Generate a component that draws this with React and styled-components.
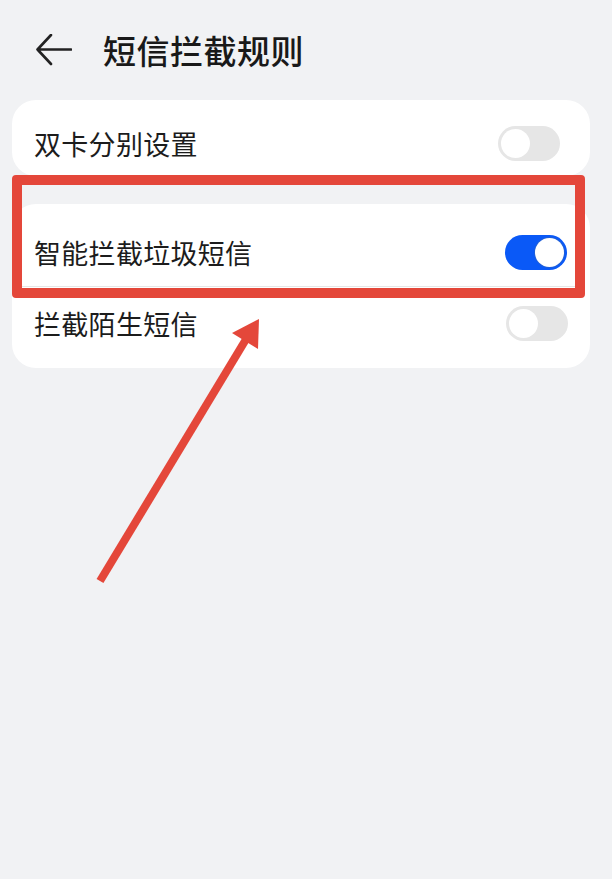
import styled, { createGlobalStyle } from "styled-components";

const GlobalStyle = createGlobalStyle`
  html, body {
    margin: 0;
    padding: 0;
    background: #f1f2f4;
  }
  body {
    font-family: "Noto Sans CJK SC", "Noto Sans", sans-serif;
    color: #1a1a1a;
  }
`;

const StyledPage = styled.main`
  position: relative;
  width: 612px;
  height: 879px;
  overflow: hidden;
  background: #f1f2f4;
`;

const StyledHeader = styled.header`
  height: 100px;
  display: flex;
  align-items: center;
  padding: 0 0 0 36px;
  box-sizing: border-box;
  gap: 31px;
`;

const StyledBack = styled.button`
  border: 0;
  background: none;
  padding: 0;
  width: 36px;
  height: 32px;
  display: flex;
  align-items: center;
  cursor: pointer;
`;

const StyledTitle = styled.h1`
  margin: 0;
  font-size: 33px;
  font-weight: 500;
  letter-spacing: 0.5px;
  color: #191919;
  line-height: 1;
`;

const StyledCards = styled.div`
  display: flex;
  flex-direction: column;
  gap: 28px;
  padding: 0 22px 0 12px;
`;

const StyledCard = styled.section`
  background: #ffffff;
  border-radius: 24px;
  padding: ${(props) => props.$padding};
`;

const StyledRow = styled.div`
  display: flex;
  align-items: center;
  justify-content: space-between;
  height: ${(props) => props.$height}px;
  padding: 0 ${(props) => props.$right}px 0 22px;
`;

const StyledLabel = styled.span`
  font-size: 27px;
  letter-spacing: 0.3px;
  color: #1c1c1c;
`;

const StyledDivider = styled.div`
  height: 1px;
  margin: 0 12px 0 6px;
  background: #e6e6e6;
`;

const StyledToggle = styled.span`
  position: relative;
  width: 62px;
  height: 35px;
  border-radius: 18px;
  box-sizing: border-box;
  background: ${(props) => (props.$on ? "#0a59f7" : "#e6e6e6")};
  flex-shrink: 0;

  &::after {
    content: "";
    position: absolute;
    top: 3px;
    left: ${(props) => (props.$on ? "30px" : "3px")};
    width: 29px;
    height: 29px;
    border-radius: 50%;
    background: #ffffff;
    box-shadow: ${(props) => (props.$on ? "0 0 0 1px #1f5fd8" : "none")};
  }
`;

const StyledHighlight = styled.div`
  position: absolute;
  left: 12px;
  top: 175px;
  width: 573px;
  height: 123px;
  box-sizing: border-box;
  border: 10px solid #e4473a;
  border-radius: 4px;
  pointer-events: none;
`;

const StyledArrow = styled.svg`
  position: absolute;
  left: 0;
  top: 0;
  pointer-events: none;
`;

function Toggle({ on }) {
  return <StyledToggle $on={on} role="switch" aria-checked={on} />;
}

export default function App() {
  return (
    <StyledPage>
      <GlobalStyle />
      <StyledHeader>
        <StyledBack aria-label="返回">
          <svg width="36" height="32" viewBox="0 0 36 32" fill="none">
            <path
              d="M15 1 L1.5 15.5 L15 30 M1.5 15.5 H35"
              stroke="#222"
              strokeWidth="2.6"
              strokeLinecap="round"
              strokeLinejoin="round"
            />
          </svg>
        </StyledBack>
        <StyledTitle>短信拦截规则</StyledTitle>
      </StyledHeader>

      <StyledCards>
        <StyledCard $padding="10px 0 0 0">
          <StyledRow $height={66} $right={30}>
            <StyledLabel>双卡分别设置</StyledLabel>
            <Toggle on={false} />
          </StyledRow>
        </StyledCard>

        <StyledCard $padding="14px 0 9px 0">
          <StyledRow $height={68} $right={23}>
            <StyledLabel>智能拦截垃圾短信</StyledLabel>
            <Toggle on />
          </StyledRow>
          <StyledDivider />
          <StyledRow $height={72} $right={22}>
            <StyledLabel>拦截陌生短信</StyledLabel>
            <Toggle on={false} />
          </StyledRow>
        </StyledCard>
      </StyledCards>

      <StyledHighlight />

      <StyledArrow width="612" height="879" viewBox="0 0 612 879">
        <line
          x1="100"
          y1="581"
          x2="248"
          y2="336"
          stroke="#e4473a"
          strokeWidth="8"
        />
        <polygon points="259,319 232,333 258,349" fill="#e4473a" />
      </StyledArrow>
    </StyledPage>
  );
}
